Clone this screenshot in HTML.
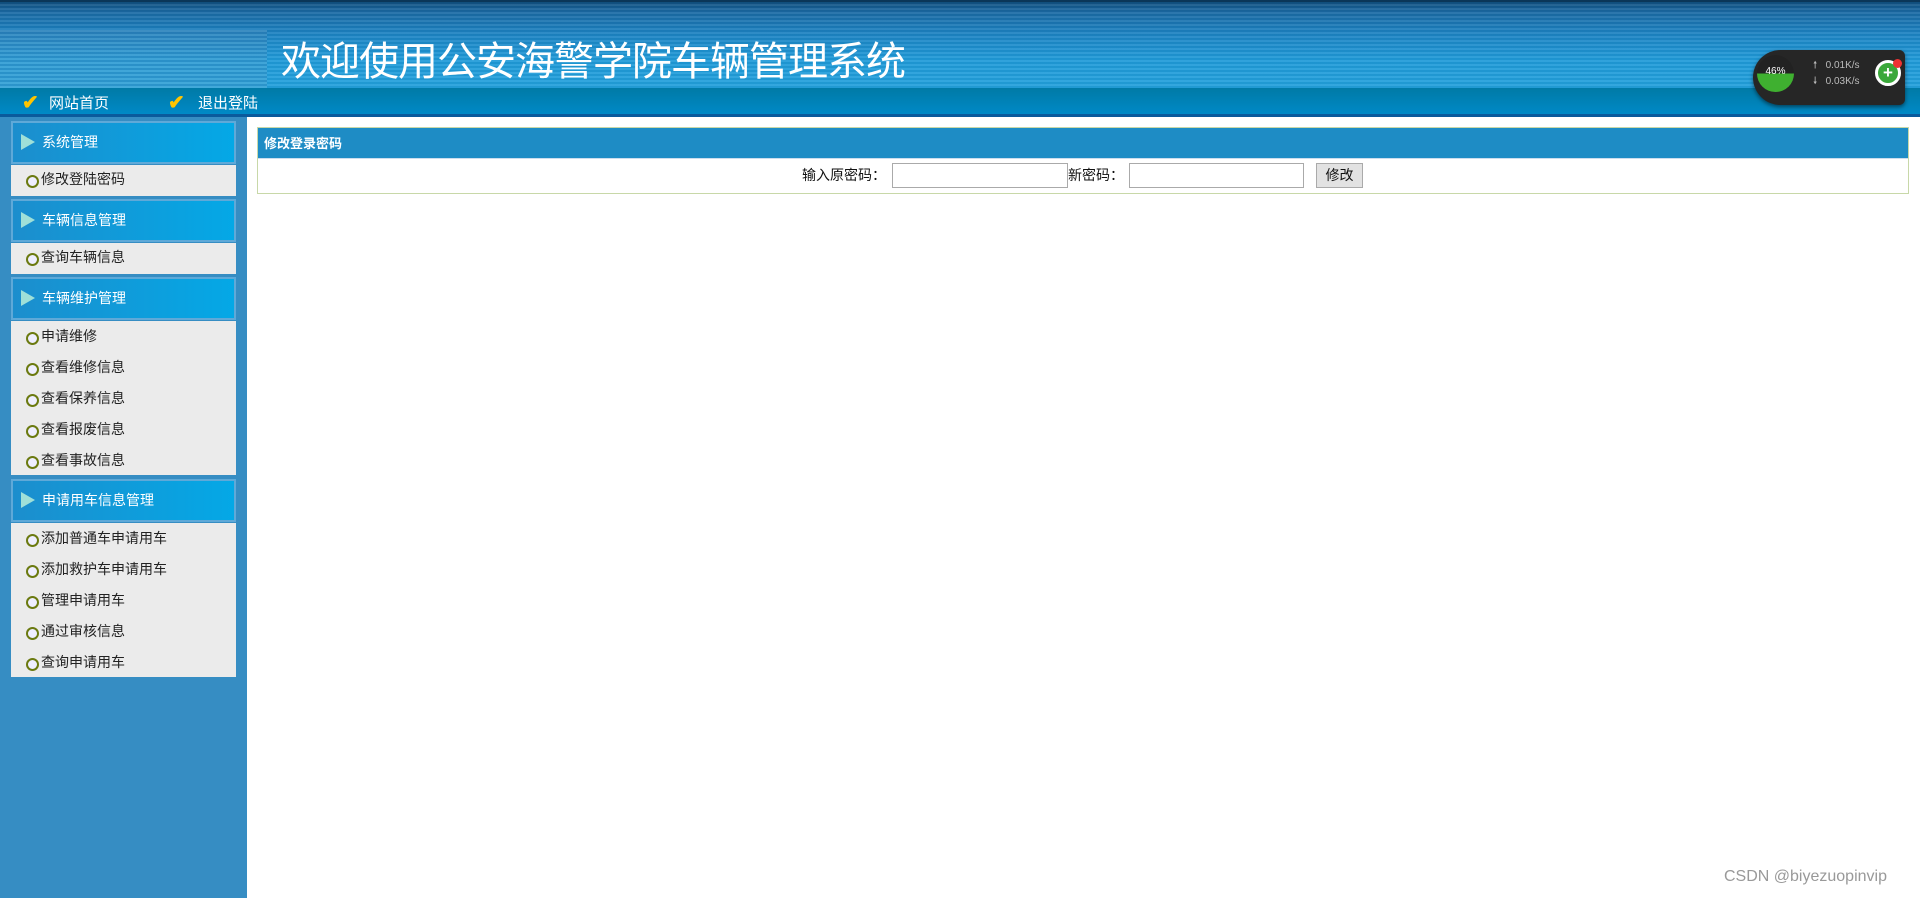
<!DOCTYPE html>
<html><head><meta charset="utf-8">
<style>
*{margin:0;padding:0;box-sizing:border-box}
body{width:1920px;height:898px;overflow:hidden;background:#fff;font-family:"Liberation Sans","Noto Sans CJK SC",sans-serif;font-size:14px;position:relative}
.hdr{position:absolute;left:0;top:0;width:1920px;height:88px;
background:repeating-linear-gradient(180deg,rgba(255,255,255,.08) 0 2px,rgba(0,0,0,.04) 2px 4px),linear-gradient(180deg,#0f4a78 0,#1a6aa4 12px,#1c84c4 35px,#1f9ad8 60px,#22a0dc 88px);}
.hdr .lft{position:absolute;left:0;top:30px;width:267px;height:58px;background:repeating-linear-gradient(180deg,rgba(255,255,255,.15) 0 2px,rgba(0,40,90,.15) 2px 4px)}
.topline{position:absolute;left:0;top:0;width:1920px;height:2px;background:#0b3658}
.title{position:absolute;left:281px;top:38px;color:#fff;font-size:40px;line-height:48px;white-space:nowrap;letter-spacing:-1px}
.nav{position:absolute;left:0;top:88px;width:1920px;height:26px;background:linear-gradient(180deg,#007aa6,#0089c6)}
.navline{position:absolute;left:0;top:114px;width:1920px;height:3px;background:#0a5a9c}
.nav span{position:absolute;top:7px;color:#fff;font-size:15px;line-height:18px}
.chk{position:absolute;top:5px;color:#ffc400;font-size:20px;line-height:20px;font-weight:bold}
.side{position:absolute;left:0;top:117px;width:247px;height:781px;background:#368dc3}
.sh{position:absolute;left:11px;width:225px;height:43px;background:linear-gradient(90deg,#1c8ecd,#04a8e6);border:2px solid #5fa9d8;color:#fff;font-size:14px;line-height:39px;padding-left:29px}
.sh:before{content:"";position:absolute;left:8px;top:11px;border-left:14px solid #9fe0d8;border-top:8px solid transparent;border-bottom:8px solid transparent}
.items{position:absolute;left:11px;width:225px;background:#ebebeb}
.it{height:31px;line-height:29px;padding-left:30px;color:#222;font-size:14px;position:relative}
.it:before{content:"";position:absolute;left:15px;top:10px;width:9px;height:9px;border-radius:50%;border:2px solid #6b7a10;background:#eef}
.panel{position:absolute;left:257px;top:127px;width:1652px;height:67px;border:1px solid #c8d8a8}
.ph{height:31px;background:#1e8cc5;color:#fff;font-weight:bold;font-size:13px;line-height:31px;padding-left:6px;border-bottom:1px solid #cde}
.lbl{position:absolute;top:38px;font-size:14px;color:#111;line-height:18px}
.inp{position:absolute;top:35px;height:25px;border:1px solid #aaa;background:#fff}
.btn{position:absolute;left:1058px;top:35px;width:47px;height:25px;background:#e2e2e2;border:1px solid #aaa;text-align:center;line-height:23px;font-size:14px;color:#111}
.wd{position:absolute;left:1753px;top:50px;width:152px;height:55px;background:#262626;border-radius:28px 6px 6px 28px;box-shadow:0 2px 4px rgba(0,0,0,.5)}
.gauge{position:absolute;left:4px;top:5px;width:37px;height:37px;border-radius:50%;background:linear-gradient(180deg,#222 50%,#3fb030 50%)}
.gauge span{position:absolute;left:0;top:11px;width:37px;text-align:center;color:#fff;font-size:10px}
.sp{position:absolute;left:60px;color:#bbb;font-size:10px;line-height:12px}
.plus{position:absolute;left:122px;top:10px;width:26px;height:26px;border-radius:50%;border:3px solid #fff;background:#3aa83a;color:#fff;font-weight:bold;text-align:center;line-height:19px;font-size:17px}
.dot{position:absolute;left:140px;top:9px;width:9px;height:9px;border-radius:50%;background:#e33}
.wm{position:absolute;left:1724px;top:868px;color:#999;font-size:16px}
</style></head><body>
<div class="hdr"><div class="lft"></div></div>
<div class="topline"></div>
<div class="title">欢迎使用公安海警学院车辆管理系统</div>
<div class="nav">
<div class="chk" style="left:22px">✔</div><span style="left:49px">网站首页</span>
<div class="chk" style="left:168px">✔</div><span style="left:198px">退出登陆</span>
</div>
<div class="navline"></div>
<div class="wd"><div class="gauge"><span>46%</span></div>
<div class="sp" style="top:10px">🠕&nbsp;&nbsp; 0.01K/s</div><div class="sp" style="top:26px">🠗&nbsp;&nbsp; 0.03K/s</div>
<div class="plus">+</div><div class="dot"></div></div>

<div class="side">
<div class="sh" style="top:4px">系统管理</div>
<div class="items" style="top:48px"><div class="it">修改登陆密码</div></div>
<div class="sh" style="top:82px">车辆信息管理</div>
<div class="items" style="top:126px"><div class="it">查询车辆信息</div></div>
<div class="sh" style="top:160px">车辆维护管理</div>
<div class="items" style="top:204px;height:154px;padding-top:1px"><div class="it">申请维修</div><div class="it">查看维修信息</div><div class="it">查看保养信息</div><div class="it">查看报废信息</div><div class="it">查看事故信息</div></div>
<div class="sh" style="top:362px">申请用车信息管理</div>
<div class="items" style="top:406px;height:154px;padding-top:1px"><div class="it">添加普通车申请用车</div><div class="it">添加救护车申请用车</div><div class="it">管理申请用车</div><div class="it">通过审核信息</div><div class="it">查询申请用车</div></div>
</div>

<div class="panel">
<div class="ph">修改登录密码</div>
<span class="lbl" style="left:544px">输入原密码：</span>
<div class="inp" style="left:634px;width:176px"></div>
<span class="lbl" style="left:810px">新密码：</span>
<div class="inp" style="left:871px;width:175px"></div>
<div class="btn">修改</div>
</div>
<div class="wm">CSDN @biyezuopinvip</div>
</body></html>
